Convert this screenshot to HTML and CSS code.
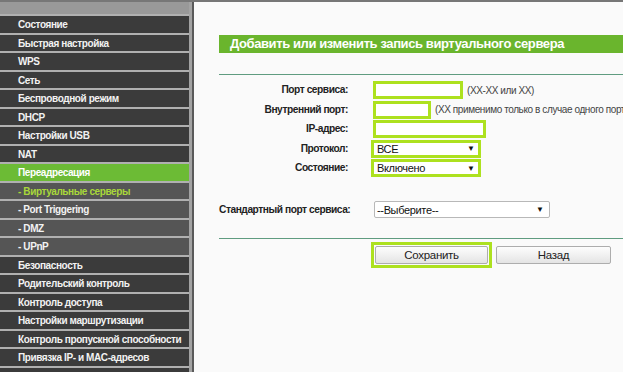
FILE: index.html
```html
<!DOCTYPE html>
<html lang="ru">
<head>
  <meta charset="UTF-8">
  <title>Виртуальные серверы</title>
  <link rel="stylesheet" href="styles.css">
</head>
<body>
  <div class="frame">
    <nav class="menu">
      <div class="menu-top"></div>
      <ul>
        <li>Состояние</li>
        <li>Быстрая настройка</li>
        <li>WPS</li>
        <li>Сеть</li>
        <li>Беспроводной режим</li>
        <li>DHCP</li>
        <li>Настройки USB</li>
        <li>NAT</li>
        <li class="active">Переадресация</li>
        <li class="sub current">- Виртуальные серверы</li>
        <li class="sub">- Port Triggering</li>
        <li class="sub">- DMZ</li>
        <li class="sub">- UPnP</li>
        <li>Безопасность</li>
        <li>Родительский контроль</li>
        <li>Контроль доступа</li>
        <li>Настройки маршрутизации</li>
        <li>Контроль пропускной способности</li>
        <li>Привязка IP- и MAC-адресов</li>
        <li>Динамический DNS</li>
      </ul>
    </nav>

    <main class="content">
      <h2 class="title">Добавить или изменить запись виртуального сервера</h2>
      <div class="rule"></div>

      <div class="fields">
        <label>Порт сервиса:</label>
        <div class="field"><span class="input w-port"></span><span class="hint">(XX-XX или XX)</span></div>

        <label>Внутренний порт:</label>
        <div class="field"><span class="input w-short"></span><span class="hint">(XX применимо только в случае одного порта сервиса)</span></div>

        <label>IP-адрес:</label>
        <div class="field"><span class="input w-ip"></span></div>

        <label>Протокол:</label>
        <div class="field"><div class="select mark"><span>ВСЕ</span><span class="arrow">▼</span></div></div>

        <label>Состояние:</label>
        <div class="field"><div class="select mark"><span>Включено</span><span class="arrow">▼</span></div></div>
      </div>

      <div class="std-row">
        <label>Стандартный порт сервиса:</label>
        <div class="select plain"><span>--Выберите--</span><span class="arrow">▼</span></div>
      </div>

      <div class="rule rule-bottom"></div>

      <div class="buttons">
        <div class="mark-frame"><button class="btn">Сохранить</button></div>
        <button class="btn btn-back">Назад</button>
      </div>
    </main>
  </div>
</body>
</html>
```

FILE: styles.css
```css
* {
  box-sizing: border-box;
}

body {
  margin: 0;
  background-color: #fafafa;
  font-family: 'Liberation Sans', Arial, sans-serif;
  color: #222;
  overflow: hidden;
}

.frame {
  display: flex;
  height: 372px;
  border-top: 2px solid #777;
}

/* left menu */
.menu {
  width: 194px;
  flex-shrink: 0;
  background-color: #3b3b3b;
  border-right: 2px solid #5a5a5a;
  box-shadow: inset -3px 0 0 #a3a3a3;
  overflow: hidden;
}

.menu-top {
  height: 12px;
  background-color: #999;
  margin-right: 3px;
}

.menu ul {
  list-style: none;
  margin: 0;
  padding: 0;
  margin-right: 3px;
}

.menu li {
  height: 18.5px;
  border-top: 2px solid #b0b0b0;
  padding-left: 18px;
  font-size: 10px;
  letter-spacing: -0.4px;
  font-weight: bold;
  line-height: 17px;
  color: #f2f2f2;
  background-color: #3b3b3b;
  white-space: nowrap;
}

.menu li.active {
  background-color: #6cbb35;
  color: #fff;
}

.menu li.sub {
  background-color: #555;
}

.menu li.current {
  color: #a9d83a;
}

/* main area */
.content {
  flex: 1;
  padding: 33px 0 0 25px;
  overflow: hidden;
  white-space: nowrap;
}

.title {
  margin: 0;
  height: 18px;
  line-height: 18px;
  padding-left: 11px;
  background-color: #6ab52d;
  color: #fff;
  font-size: 13px;
  letter-spacing: -0.4px;
  font-weight: bold;
}

.rule {
  height: 1px;
  background-color: #5f9c80;
  margin-top: 21px;
}

.fields {
  display: grid;
  grid-template-columns: 129px auto;
  column-gap: 23px;
  row-gap: 1.5px;
  margin-top: 6px;
}

.fields label {
  text-align: right;
  font-size: 10.2px;
  letter-spacing: -0.45px;
  font-weight: bold;
  line-height: 18px;
}

.field {
  display: flex;
  align-items: center;
  height: 18px;
}

.input {
  display: block;
  height: 18px;
  margin-left: 2px;
  background-color: #fff;
  border: 3px solid #ade11f;
}

.w-port { width: 90px; }
.w-short { width: 58px; }
.w-ip { width: 113px; }

.hint {
  margin-left: 4px;
  font-size: 10px;
  letter-spacing: -0.4px;
  color: #444;
}

.select {
  display: flex;
  align-items: center;
  justify-content: space-between;
  background-color: #fff;
  font-size: 11px;
  letter-spacing: -0.35px;
  color: #111;
}

.select .arrow {
  font-size: 8px;
  letter-spacing: 0;
}

.select.mark {
  width: 110px;
  height: 18px;
  border: 3px solid #ade11f;
  padding: 0 3px 0 3px;
}

.std-row {
  display: flex;
  align-items: center;
  margin-top: 24px;
}

.std-row label {
  width: 155px;
  flex-shrink: 0;
  font-size: 10.2px;
  letter-spacing: -0.45px;
  font-weight: bold;
}

.select.plain {
  width: 176px;
  height: 17px;
  border: 1px solid #b8b8b8;
  border-radius: 2px;
  padding: 0 5px 0 2px;
}

.rule-bottom {
  margin-top: 20px;
}

.buttons {
  display: flex;
  align-items: center;
  gap: 4px;
  margin-top: 3px;
  padding-left: 152px;
}

.mark-frame {
  border: 3px solid #ade11f;
  padding: 1px;
}

.btn {
  display: block;
  width: 113px;
  height: 18px;
  padding: 0;
  border: 1px solid #adadad;
  border-radius: 2px;
  background: linear-gradient(#fdfdfd, #e4e4e4);
  font-family: 'Liberation Sans', Arial, sans-serif;
  font-size: 11.5px;
  letter-spacing: -0.3px;
  color: #222;
}

.btn-back {
  width: 115px;
}
```
